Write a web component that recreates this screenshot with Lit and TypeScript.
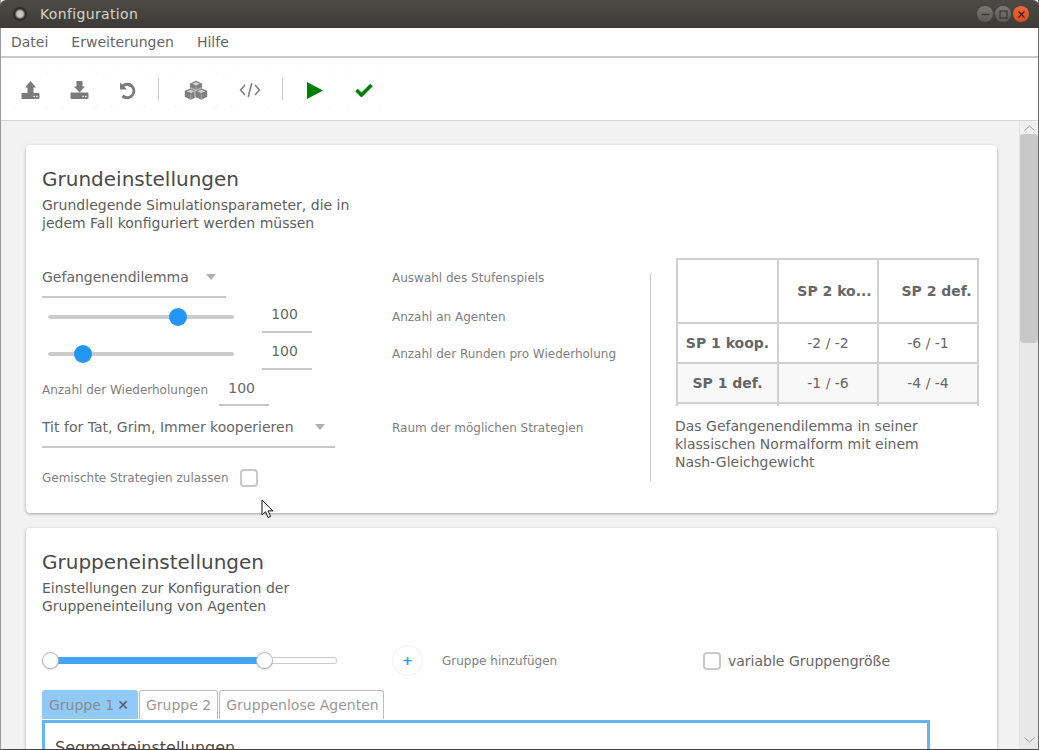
import { LitElement, css, html, svg } from 'lit';
import { customElement } from 'lit/decorators.js';

const TRAY_DOTS = svg`<rect x="12.500" y="14.800" width="1.400" height="1.400" fill="#fff"/><rect x="15.200" y="14.800" width="1.400" height="1.400" fill="#fff"/>`;

const cube = (cx: number, cy: number) => svg`
  <path d="M${cx} ${cy - 6} l6.300 2.800 v6.200 L${cx} ${cy + 6} l-6.300 -3 v-6.200z" fill="#7f7f7f" stroke="#fff" stroke-width=".6"/>
  <path d="M${cx} ${cy - 4.300} l3.800 1.600 -3.800 1.600 -3.800 -1.600z" fill="#d6d6d6"/>
  <path d="M${cx} ${cy} v5.500" stroke="#c4c4c4" stroke-width=".7"/>`;

const ICONS = {
  upload: svg`<path d="M9.500 0 15 6.500h-2.500V12h-6V6.500H4z"/><rect x=".5" y="12" width="18" height="6" rx="1"/>${TRAY_DOTS}`,
  download: svg`<path d="M6.500 0h6v5.500H15l-5.500 6-5.500-6h2.500z"/><rect x=".5" y="11.500" width="18" height="6.500" rx="1"/>${TRAY_DOTS}`,
  undo: svg`<path d="M1 .5v7h7L5.300 4.800A5.200 5.200 0 1 1 4.500 12.600l-2 2.300A8.200 8.200 0 1 0 3 2.500z"/>`,
  cubes: svg`${cube(12, 6.500)}${cube(6.800, 14)}${cube(17.200, 14)}`,
};

@customElement('app-root')
export class AppRoot extends LitElement {
  static override styles = css`
    :host { display: block; width: 1039px; height: 750px; overflow: hidden; font-family: 'DejaVu Sans', sans-serif; color: #666; position: relative; background: #fff; }
    .window { height: 750px; display: flex; flex-direction: column; border-left: 1px solid #9a9a9a; border-right: 1px solid #6a6a6a; border-bottom: 1px solid #444; box-sizing: border-box; }

    .titlebar { height: 28px; margin: 0 -1px; flex: none; display: flex; align-items: center; background: linear-gradient(#4b4a45, #3c3b37); border-radius: 6px 6px 0 0; color: #d8d4ca; font-size: 14px; letter-spacing: 0.35px; padding: 0 10px 0 13px; }
    .app-dot { width: 14px; height: 14px; border-radius: 50%; background: radial-gradient(#c8c6c0 0 30%, #2c2b28 55% 100%); margin-right: 13px; }
    .win-btns { margin-left: auto; display: flex; gap: 2px; }
    .win-btn { width: 16px; height: 16px; border-radius: 50%; background: linear-gradient(#7a7974, #5a5954); color: #333; display: flex; align-items: center; justify-content: center; }
    .win-btn.close { background: linear-gradient(#f0683a, #dc4a1c); }

    .menubar { height: 30px; box-sizing: border-box; padding-left: 10px; flex: none; display: flex; align-items: center; gap: 23px; font-size: 14px; color: #666; border-bottom: 2px solid #c8c8c8; }
    .toolbar { height: 63px; flex: none; display: flex; align-items: center; gap: 11px; border-bottom: 1px solid #d4d4d4; box-sizing: border-box; padding-left: 10px; }
    .tool {
      width: 38px; height: 41px; box-sizing: border-box; padding-top: 2px; display: flex; align-items: center; justify-content: center;
      background:
        radial-gradient(circle at 100% 100%, transparent 3px, #f7f7f7 3px 4px, transparent 4px) left top / 5px 5px no-repeat,
        radial-gradient(circle at 0 100%, transparent 3px, #f7f7f7 3px 4px, transparent 4px) right top / 5px 5px no-repeat,
        radial-gradient(circle at 100% 0, transparent 3px, #f7f7f7 3px 4px, transparent 4px) left bottom / 5px 5px no-repeat,
        radial-gradient(circle at 0 0, transparent 3px, #f7f7f7 3px 4px, transparent 4px) right bottom / 5px 5px no-repeat;
    }
    .tool svg { fill: #7a7a7a; }
    .tool.cubes { width: 45px; margin-left: 3px; }
    .tool.code { width: 42px; }
    .tool.play { width: 36px; margin-left: 3px; }
    .tool.ok { width: 40px; }
    .sep { width: 1px; height: 22px; background: #c8c8c8; }

    .scroll { flex: 1; min-height: 0; display: flex; background: #f2f2f2; overflow: hidden; }
    .content { flex: 1; min-width: 0; padding: 24px 22px 0 25px; display: flex; flex-direction: column; gap: 15px; }
    .scrollbar { width: 19px; box-sizing: border-box; flex: none; border-left: 1px solid #e2e2e2; background: #e8e8e8; display: flex; flex-direction: column; align-items: center; }
    .arrow { height: 13px; width: 100%; background: #f0f0f0; display: flex; align-items: center; justify-content: center; flex: none; }
    .thumb { width: 18px; height: 209px; border-radius: 4px; background: #c8c8c8; flex: none; }
    .arrow.down { margin-top: auto; height: 18px; background: transparent; }

    .card { background: #fff; border-radius: 4px; box-shadow: 0 1px 3px rgba(0,0,0,.35); padding: 22px 16px 0; flex: none; }
    .card.first { height: 368px; box-sizing: border-box; }
    .title { font-size: 20px; line-height: 24px; color: #4a4a4a; }
    .desc { font-size: 14px; line-height: 18px; margin-top: 5px; color: #5e5e5e; }

    .settings { display: grid; grid-template-columns: 350px 258px 1px 1fr; margin-top: 26px; }
    .rows { grid-column: 1 / 3; display: grid; grid-template-columns: 350px 258px; grid-template-rows: 40px 37px 37px 36px 40px 60px; }
    .row { display: flex; align-items: center; }
    .hint { font-size: 12px; color: #808080; display: flex; align-items: center; }
    .select { display: flex; align-items: center; justify-content: space-between; border-bottom: 2px solid #c8c8c8; box-sizing: border-box; font-size: 14px; color: #666; height: 40px; padding-right: 10px; }
    .select.short { width: 184px; }
    .select.long { width: 293px; }
    .caret { width: 0; height: 0; border: 5.500px solid transparent; border-top: 6px solid #b0b0b0; border-bottom: 0; }
    .slider { width: 198px; padding: 0 6px; box-sizing: border-box; }
    .track { height: 4px; border-radius: 2px; background: #ccc; position: relative; }
    .knob { position: absolute; top: -7px; width: 18px; height: 18px; border-radius: 50%; background: #2196f3; margin-left: -9px; }
    .field { width: 50px; box-sizing: border-box; border-bottom: 2px solid #c8c8c8; text-align: center; font-size: 14px; color: #666; height: 32px; line-height: 26px; margin-left: 22px; padding-right: 5px; }
    .field.inline { margin-left: 11px; line-height: 28px; }
    .check { width: 18px; height: 18px; box-sizing: border-box; border: 2px solid #c8c8c8; border-radius: 4px; background: #fff; flex: none; }
    .check.spaced { margin-left: 11px; }

    .divider { background: #c8c8c8; height: 208px; margin-top: 15px; }
    .side { padding-left: 25px; }
    .payoff { width: 303px; height: 148px; overflow: hidden; display: grid; grid-template-columns: 101px 100px 100px; grid-template-rows: 64px 40px 40px 2px; box-sizing: border-box; border-top: 2px solid #d0d0d0; border-left: 2px solid #d0d0d0; font-size: 14px; color: #666; }
    .cell { display: flex; align-items: center; justify-content: center; border-right: 2px solid #d0d0d0; border-bottom: 2px solid #d0d0d0; box-sizing: border-box; white-space: nowrap; overflow: hidden; }
    .cell.head { font-weight: bold; }
    .cell.top { padding-left: 13px; }
    .cell.top.last { padding-left: 17px; }
    .cell.alt { background: #f8f8f8; }
    .cell.tick { border-bottom: 0; }
    .caption { font-size: 14px; line-height: 18px; margin: 11px 0 0 -1px; color: #666; width: 262px; }

    .group-row { display: flex; align-items: center; height: 35px; margin-top: 28px; }
    .range { width: 287px; height: 7px; margin-left: 8px; border-radius: 3px; background: #fff; box-shadow: inset 0 0 0 1px #ccc; position: relative; flex: none; }
    .range .fill { position: absolute; left: 0; top: 0; bottom: 0; background: #42a5f5; border-radius: 3px 0 0 3px; }
    .range .thumb-w { position: absolute; top: -4px; margin-left: -7px; width: 15px; height: 15px; border-radius: 50%; background: #fff; box-shadow: 0 0 0 1px #bbb, 0 1px 2px rgba(0,0,0,.4); }
    .add { width: 31px; height: 31px; margin-left: 55px; border-radius: 50%; border: 1px solid #f0f0f0; box-sizing: border-box; display: flex; align-items: center; justify-content: center; color: #2196f3; font-size: 13px; font-weight: bold; flex: none; }
    .add-label { font-size: 12px; color: #808080; margin-left: 19px; width: 261px; flex: none; }
    .var-label { font-size: 14px; margin-left: 7px; }

    .tabs { display: flex; gap: 1px; margin-top: 12px; height: 30px; }
    .tab { border: 1px solid #bdbdbd; border-bottom: 0; border-radius: 3px 3px 0 0; padding: 0 6px; height: 29px; line-height: 28px; font-size: 14px; color: #999; box-sizing: border-box; }
    .tab:last-child { padding-right: 4px; }
    .tab.active { background: #90caf9; border-color: #90caf9; color: #8a8a8a; padding-right: 8px; }
    .tab .x { color: #555; margin-left: 3px; }
    .panel { border: 3px solid #64b5f6; border-bottom: 0; width: 888px; box-sizing: border-box; padding: 15px 10px 0; font-size: 16px; line-height: 20px; color: #4a4a4a; height: 60px; }
    .cursor { position: absolute; left: 261px; top: 499px; }
  `;

  override render() {
    return html`
      <div class="window">
        <div class="titlebar">
          <span class="app-dot"></span>Konfiguration
          <div class="win-btns">
            <span class="win-btn"><svg width="9" height="9" viewBox="0 0 9 9"><path d="M1 4.500h7" stroke="#333" stroke-width="1.300"/></svg></span>
            <span class="win-btn"><svg width="9" height="9" viewBox="0 0 9 9"><rect x="1" y="1" width="7" height="7" fill="none" stroke="#333" stroke-width="1.100"/></svg></span>
            <span class="win-btn close"><svg width="9" height="9" viewBox="0 0 9 9"><path d="m1.500 1.500 6 6m0-6-6 6" stroke="#3a1a10" stroke-width="1.300"/></svg></span>
          </div>
        </div>
        <div class="menubar"><span>Datei</span><span>Erweiterungen</span><span>Hilfe</span></div>
        <div class="toolbar">
          <div class="tool"><svg width="19" height="18" viewBox="0 0 19 18">${ICONS.upload}</svg></div>
          <div class="tool"><svg width="19" height="18" viewBox="0 0 19 18">${ICONS.download}</svg></div>
          <div class="tool"><svg width="18" height="17" viewBox="0 0 18 17">${ICONS.undo}</svg></div>
          <span class="sep"></span>
          <div class="tool cubes"><svg width="24" height="20" viewBox="0 0 24 20">${ICONS.cubes}</svg></div>
          <div class="tool code"><svg width="22" height="16" viewBox="0 0 22 16"><path d="M6 3 1.500 8 6 13M16 3l4.500 5L16 13M12.800 1 9.200 15" fill="none" stroke="#7a7a7a" stroke-width="1.500"/></svg></div>
          <span class="sep"></span>
          <div class="tool play"><svg width="16" height="17" viewBox="0 0 16 17"><path d="M0 0 16 8.500 0 17z" style="fill:#008000"/></svg></div>
          <div class="tool ok"><svg width="18" height="14" viewBox="0 0 18 14"><path d="M1.500 7 6.500 12 16.500 2" fill="none" stroke="#008000" stroke-width="3.600"/></svg></div>
        </div>
        <div class="scroll">
          <div class="content">
            <section class="card first">
              <div class="title">Grundeinstellungen</div>
              <div class="desc">Grundlegende Simulationsparameter, die in<br />jedem Fall konfiguriert werden müssen</div>
              <div class="settings">
                <div class="rows">
                  <div class="row"><div class="select short"><span>Gefangenendilemma</span><span class="caret"></span></div></div>
                  <div class="hint">Auswahl des Stufenspiels</div>
                  <div class="row"><div class="slider"><div class="track"><div class="knob" style="left:70%"></div></div></div><div class="field">100</div></div>
                  <div class="hint">Anzahl an Agenten</div>
                  <div class="row"><div class="slider"><div class="track"><div class="knob" style="left:19%"></div></div></div><div class="field">100</div></div>
                  <div class="hint">Anzahl der Runden pro Wiederholung</div>
                  <div class="row"><span class="hint">Anzahl der Wiederholungen</span><div class="field inline">100</div></div>
                  <div class="hint"></div>
                  <div class="row"><div class="select long"><span>Tit for Tat, Grim, Immer kooperieren</span><span class="caret"></span></div></div>
                  <div class="hint">Raum der möglichen Strategien</div>
                  <div class="row"><span class="hint">Gemischte Strategien zulassen</span><span class="check spaced"></span></div>
                  <div class="hint"></div>
                </div>
                <div class="divider"></div>
                <div class="side">
                  <div class="payoff">
                    <div class="cell head"></div><div class="cell head top">SP 2 ko...</div><div class="cell head top last">SP 2 def.</div>
                    <div class="cell head">SP 1 koop.</div><div class="cell">-2 / -2</div><div class="cell">-6 / -1</div>
                    <div class="cell head alt">SP 1 def.</div><div class="cell alt">-1 / -6</div><div class="cell alt">-4 / -4</div>
                    <div class="cell tick"></div><div class="cell tick"></div><div class="cell tick"></div>
                  </div>
                  <div class="caption">Das Gefangenendilemma in seiner klassischen Normalform mit einem Nash-Gleichgewicht</div>
                </div>
              </div>
            </section>
            <section class="card">
              <div class="title">Gruppeneinstellungen</div>
              <div class="desc">Einstellungen zur Konfiguration der<br />Gruppeneinteilung von Agenten</div>
              <div class="group-row">
                <div class="range"><div class="fill" style="width:214px"></div><div class="thumb-w" style="left:0"></div><div class="thumb-w" style="left:214px"></div></div>
                <div class="add">+</div>
                <div class="add-label">Gruppe hinzufügen</div>
                <span class="check"></span>
                <span class="var-label">variable Gruppengröße</span>
              </div>
              <div class="tabs">
                <div class="tab active">Gruppe 1<span class="x">✕</span></div>
                <div class="tab">Gruppe 2</div>
                <div class="tab">Gruppenlose Agenten</div>
              </div>
              <div class="panel">Segmenteinstellungen</div>
            </section>
          </div>
          <div class="scrollbar">
            <div class="arrow"><svg width="11" height="6" viewBox="0 0 11 6"><path d="M.5 5.500 5.500 1l5 4.500" fill="none" stroke="#9e9e9e"/></svg></div>
            <div class="thumb"></div>
            <div class="arrow down"><svg width="11" height="6" viewBox="0 0 11 6"><path d="M.5.500 5.500 5l5-4.500" fill="none" stroke="#9e9e9e"/></svg></div>
          </div>
        </div>
      </div>
      <svg class="cursor" width="14" height="20" viewBox="0 0 14 20"><path d="M1 1v15l3.500-3.300 2.500 5.800 2.600-1.100-2.500-5.500H12z" fill="#fff" stroke="#111"/></svg>
    `;
  }
}
